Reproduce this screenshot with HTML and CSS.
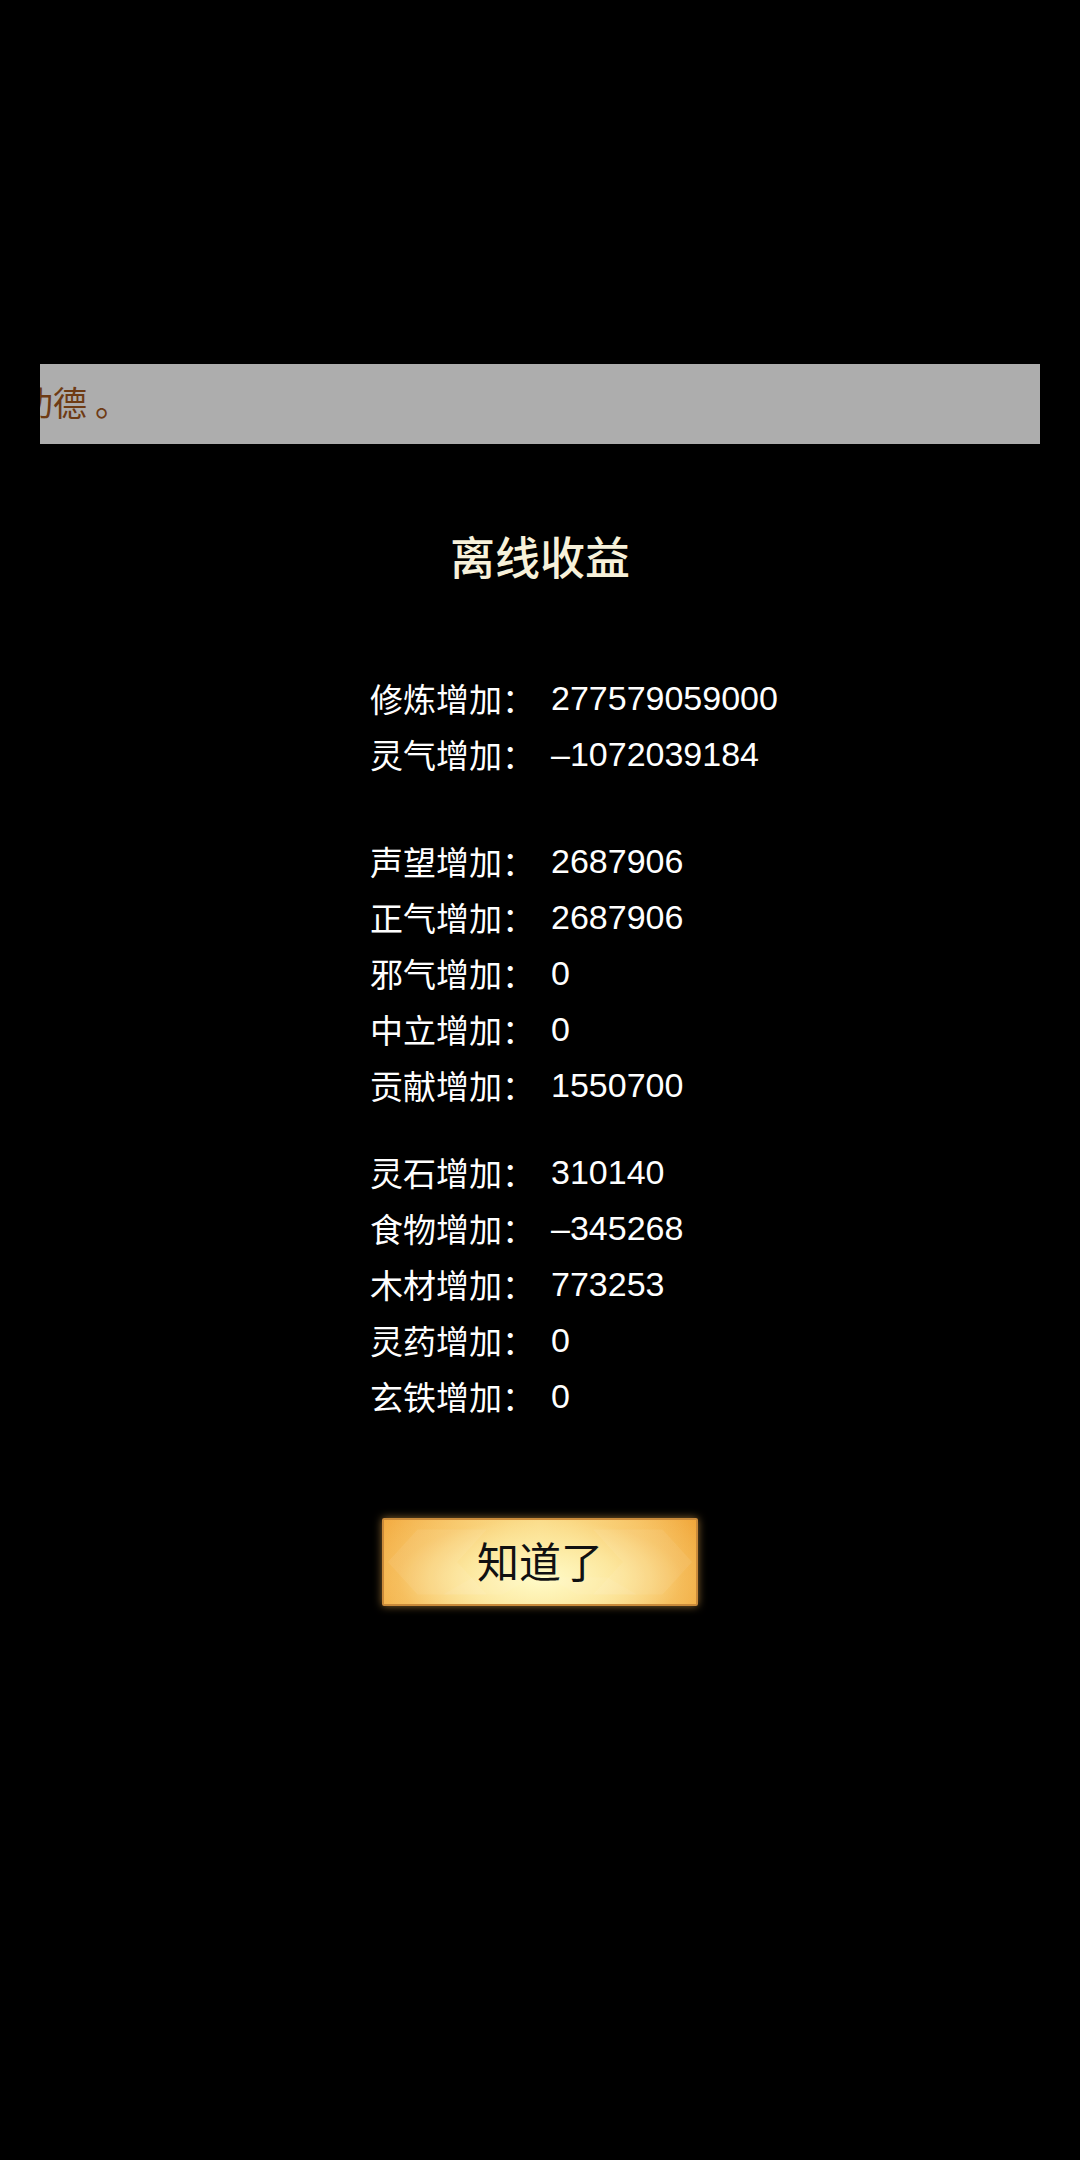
FILE: index.html
```html
<!DOCTYPE html>
<html lang="zh-CN">
<head>
<meta charset="utf-8">
<title>离线收益</title>
<link rel="stylesheet" href="styles.css">
</head>
<body>
<div class="page">
  <div class="notice"><span class="notice-text">功德<span class="notice-dot">。</span></span></div>
  <h1 class="title">离线收益</h1>
  <div class="groups">
    <div class="group">
      <span class="label">修炼增加：</span><span class="value">277579059000</span>
      <span class="label">灵气增加：</span><span class="value">–1072039184</span>
    </div>
    <div class="group">
      <span class="label">声望增加：</span><span class="value">2687906</span>
      <span class="label">正气增加：</span><span class="value">2687906</span>
      <span class="label">邪气增加：</span><span class="value">0</span>
      <span class="label">中立增加：</span><span class="value">0</span>
      <span class="label">贡献增加：</span><span class="value">1550700</span>
    </div>
    <div class="group">
      <span class="label">灵石增加：</span><span class="value">310140</span>
      <span class="label">食物增加：</span><span class="value">–345268</span>
      <span class="label">木材增加：</span><span class="value">773253</span>
      <span class="label">灵药增加：</span><span class="value">0</span>
      <span class="label">玄铁增加：</span><span class="value">0</span>
    </div>
  </div>
  <button class="ok-btn" type="button">
    <svg class="ok-deco" viewBox="0 0 316 88" preserveAspectRatio="none" aria-hidden="true">
      <polygon points="4,44 34,10 104,10 74,44 104,78 34,78" fill="rgba(255,255,255,0.07)"/>
      <polygon points="312,44 282,10 212,10 242,44 212,78 282,78" fill="rgba(255,255,255,0.07)"/>
      <polygon points="60,78 90,60 150,60 120,78" fill="rgba(255,255,255,0.06)"/>
      <polygon points="256,78 226,60 166,60 196,78" fill="rgba(255,255,255,0.06)"/>
    </svg>
    <span class="ok-text">知道了</span>
  </button>
</div>
</body>
</html>
```
FILE: styles.css
```css
html, body {
  margin: 0;
  padding: 0;
  background: #000;
}

.page {
  width: 1080px;
  min-height: 2160px;
  background: #000;
  padding-top: 364px;
  box-sizing: border-box;
  display: flex;
  flex-direction: column;
  font-family: "Liberation Sans", "Noto Sans CJK SC", sans-serif;
}

.notice {
  margin: 0 40px;
  height: 80px;
  background: #adadad;
  overflow: hidden;
  display: flex;
  align-items: center;
  white-space: nowrap;
}

.notice-text {
  margin-left: -21px;
  margin-bottom: 5px;
  font-family: "Noto Sans CJK SC", sans-serif;
  font-size: 34px;
  line-height: 40px;
  color: #6e3b14;
}

.notice-dot {
  margin-left: 8px;
}

.title {
  margin: 82px 0 0;
  text-align: center;
  font-family: "Noto Sans CJK SC", sans-serif;
  font-size: 45px;
  line-height: 60px;
  font-weight: 500;
  color: #f7f1da;
}

.groups {
  margin-top: 84px;
  padding-left: 370px;
  display: flex;
  flex-direction: column;
}

.group {
  display: grid;
  grid-template-columns: 181px auto;
  grid-auto-rows: 56px;
  align-items: center;
  color: #fff;
  font-size: 33px;
}

.group:nth-child(2) {
  margin-top: 51px;
}

.group:nth-child(3) {
  margin-top: 31px;
}

.label {
  font-family: "Noto Sans CJK SC", sans-serif;
  line-height: 56px;
}

.value {
  font-family: "Liberation Sans", sans-serif;
  font-size: 34px;
  line-height: 56px;
}

.ok-btn {
  position: relative;
  margin: 94px auto 0;
  width: 316px;
  height: 88px;
  padding: 0;
  border: 2px solid #c98a3a;
  border-radius: 2px;
  background:
    radial-gradient(ellipse 70% 110% at 50% 70%, rgba(255, 251, 200, 1) 0%, rgba(253, 236, 166, 0.85) 35%, rgba(250, 214, 128, 0.4) 65%, rgba(248, 196, 98, 0) 100%),
    linear-gradient(90deg, #f2a93e 0%, #f6bd5c 18%, #fad985 40%, #fbe092 50%, #fad985 60%, #f6bd5c 82%, #f0a436 100%);
  box-shadow: 0 0 8px rgba(255, 190, 90, 0.55);
  display: flex;
  align-items: center;
  justify-content: center;
  box-sizing: border-box;
}

.ok-deco {
  position: absolute;
  left: 0;
  top: 0;
  width: 100%;
  height: 100%;
}

.ok-text {
  position: relative;
  margin-bottom: 4px;
  font-family: "Noto Sans CJK SC", sans-serif;
  font-size: 42px;
  line-height: 48px;
  color: #111;
}
```
